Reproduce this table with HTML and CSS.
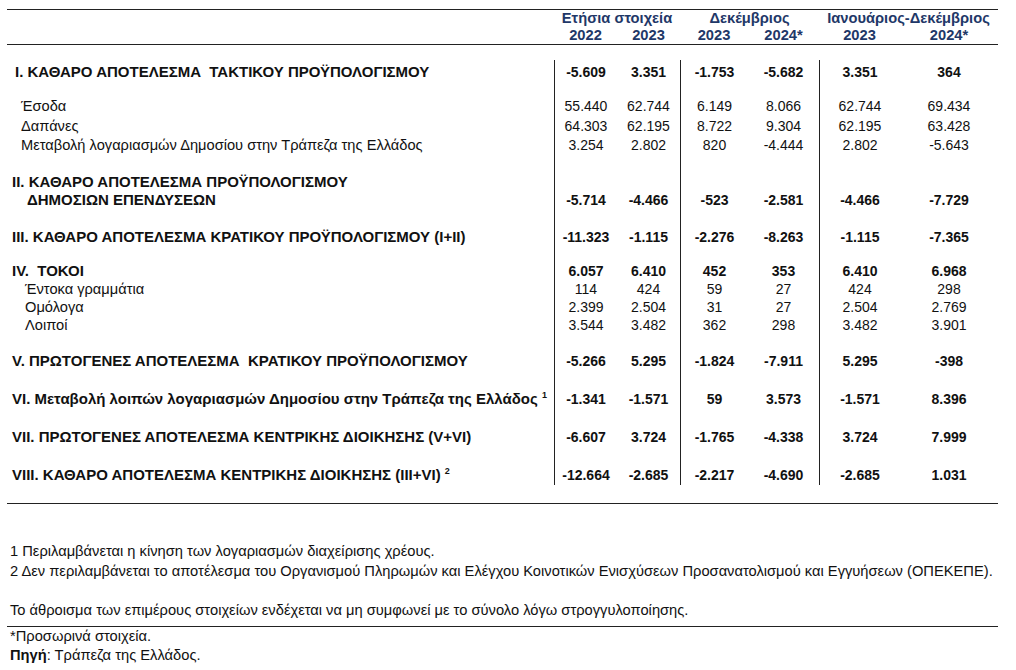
FILE: index.html
```html
<!DOCTYPE html>
<html lang="el">
<head>
<meta charset="utf-8">
<title>Αποτελέσματα προϋπολογισμού</title>
<link rel="stylesheet" href="styles.css">
</head>
<body>
<div class="page">
  <div class="head">
    <div class="hrow">
      <div></div>
      <div class="span2">Ετήσια στοιχεία</div>
      <div class="span2">Δεκέμβριος</div>
      <div class="span2">Ιανουάριος-Δεκέμβριος</div>
    </div>
    <div class="hrow">
      <div></div>
      <div>2022</div><div>2023</div><div>2023</div><div>2024*</div><div>2023</div><div>2024*</div>
    </div>
  </div>

  <div class="body">
    <div class="row b first">
      <div class="lbl l8">I. ΚΑΘΑΡΟ ΑΠΟΤΕΛΕΣΜΑ&nbsp; ΤΑΚΤΙΚΟΥ ΠΡΟΫΠΟΛΟΓΙΣΜΟΥ</div>
      <div class="v g">-5.609</div><div class="v">3.351</div><div class="v g">-1.753</div><div class="v">-5.682</div><div class="v g">3.351</div><div class="v">364</div>
    </div>
    <div class="row sub sec15">
      <div class="lbl l14">Έσοδα</div>
      <div class="v g">55.440</div><div class="v">62.744</div><div class="v g">6.149</div><div class="v">8.066</div><div class="v g">62.744</div><div class="v">69.434</div>
    </div>
    <div class="row sub">
      <div class="lbl l14">Δαπάνες</div>
      <div class="v g">64.303</div><div class="v">62.195</div><div class="v g">8.722</div><div class="v">9.304</div><div class="v g">62.195</div><div class="v">63.428</div>
    </div>
    <div class="row sub">
      <div class="lbl l14">Μεταβολή λογαριασμών Δημοσίου στην Τράπεζα της Ελλάδος</div>
      <div class="v g">3.254</div><div class="v">2.802</div><div class="v g">820</div><div class="v">-4.444</div><div class="v g">2.802</div><div class="v">-5.643</div>
    </div>
    <div class="row b two sec17">
      <div class="lbl l5">II. ΚΑΘΑΡΟ ΑΠΟΤΕΛΕΣΜΑ ΠΡΟΫΠΟΛΟΓΙΣΜΟΥ<br><span class="ind">ΔΗΜΟΣΙΩΝ ΕΠΕΝΔΥΣΕΩΝ</span></div>
      <div class="v g">-5.714</div><div class="v">-4.466</div><div class="v g">-523</div><div class="v">-2.581</div><div class="v g">-4.466</div><div class="v">-7.729</div>
    </div>
    <div class="row b sec18">
      <div class="lbl l5">III. ΚΑΘΑΡΟ ΑΠΟΤΕΛΕΣΜΑ ΚΡΑΤΙΚΟΥ ΠΡΟΫΠΟΛΟΓΙΣΜΟΥ (I+II)</div>
      <div class="v g">-11.323</div><div class="v">-1.115</div><div class="v g">-2.276</div><div class="v">-8.263</div><div class="v g">-1.115</div><div class="v">-7.365</div>
    </div>
    <div class="row b s18 sec15">
      <div class="lbl l5">IV.&nbsp; ΤΟΚΟΙ</div>
      <div class="v g">6.057</div><div class="v">6.410</div><div class="v g">452</div><div class="v">353</div><div class="v g">6.410</div><div class="v">6.968</div>
    </div>
    <div class="row s18">
      <div class="lbl l18">Έντοκα γραμμάτια</div>
      <div class="v g">114</div><div class="v">424</div><div class="v g">59</div><div class="v">27</div><div class="v g">424</div><div class="v">298</div>
    </div>
    <div class="row s18">
      <div class="lbl l18">Ομόλογα</div>
      <div class="v g">2.399</div><div class="v">2.504</div><div class="v g">31</div><div class="v">27</div><div class="v g">2.504</div><div class="v">2.769</div>
    </div>
    <div class="row s18">
      <div class="lbl l18">Λοιποί</div>
      <div class="v g">3.544</div><div class="v">3.482</div><div class="v g">362</div><div class="v">298</div><div class="v g">3.482</div><div class="v">3.901</div>
    </div>
    <div class="row b sec17">
      <div class="lbl l5">V. ΠΡΩΤΟΓΕΝΕΣ ΑΠΟΤΕΛΕΣΜΑ&nbsp; ΚΡΑΤΙΚΟΥ ΠΡΟΫΠΟΛΟΓΙΣΜΟΥ</div>
      <div class="v g">-5.266</div><div class="v">5.295</div><div class="v g">-1.824</div><div class="v">-7.911</div><div class="v g">5.295</div><div class="v">-398</div>
    </div>
    <div class="row b sec18">
      <div class="lbl l5">VI. Μεταβολή λοιπών λογαριασμών Δημοσίου στην Τράπεζα της Ελλάδος <sup>1</sup></div>
      <div class="v g">-1.341</div><div class="v">-1.571</div><div class="v g">59</div><div class="v">3.573</div><div class="v g">-1.571</div><div class="v">8.396</div>
    </div>
    <div class="row b sec18">
      <div class="lbl l5">VII. ΠΡΩΤΟΓΕΝΕΣ ΑΠΟΤΕΛΕΣΜΑ ΚΕΝΤΡΙΚΗΣ ΔΙΟΙΚΗΣΗΣ (V+VI)</div>
      <div class="v g">-6.607</div><div class="v">3.724</div><div class="v g">-1.765</div><div class="v">-4.338</div><div class="v g">3.724</div><div class="v">7.999</div>
    </div>
    <div class="row b sec18">
      <div class="lbl l5">VIII. ΚΑΘΑΡΟ ΑΠΟΤΕΛΕΣΜΑ ΚΕΝΤΡΙΚΗΣ ΔΙΟΙΚΗΣΗΣ (III+VI) <sup>2</sup></div>
      <div class="v g">-12.664</div><div class="v">-2.685</div><div class="v g">-2.217</div><div class="v">-4.690</div><div class="v g">-2.685</div><div class="v">1.031</div>
    </div>
  </div>

  <div class="foot">
    <p class="n1">1 Περιλαμβάνεται η κίνηση των λογαριασμών διαχείρισης χρέους.</p>
    <p class="n2">2 Δεν περιλαμβάνεται το αποτέλεσμα του Οργανισμού Πληρωμών και Ελέγχου Κοινοτικών Ενισχύσεων Προσανατολισμού και Εγγυήσεων (ΟΠΕΚΕΠΕ).</p>
    <p class="n3">Το άθροισμα των επιμέρους στοιχείων ενδέχεται να μη συμφωνεί με το σύνολο λόγω στρογγυλοποίησης.</p>
    <div class="src">
      <p>*Προσωρινά στοιχεία.</p>
      <p><b>Πηγή</b>: Τράπεζα της Ελλάδος.</p>
    </div>
  </div>
</div>
</body>
</html>
```

FILE: styles.css
```css
html, body {
  margin: 0;
  padding: 0;
  background: #fff;
}
body {
  font-family: "Liberation Sans", Arial, sans-serif;
  font-size: 14px;
  color: #111;
}
.page {
  width: 991px;
  margin-left: 7px;
  padding-top: 9px;
}
.head {
  border-top: 1px solid #222;
  border-bottom: 1px solid #222;
  color: #1f3868;
  font-weight: bold;
  font-size: 14.7px;
  line-height: 17px;
}
.hrow, .row {
  display: grid;
  grid-template-columns: 547px 63px 63px 68px 71px 81px 98px;
}
.hrow > div {
  text-align: center;
  white-space: nowrap;
}
.hrow .span2 {
  grid-column: span 2;
}
.body {
  margin-top: 15px;
}
.row > div {
  line-height: 19.5px;
}
.row .v {
  text-align: center;
  display: flex;
  align-items: flex-end;
  justify-content: center;
}
.row .g {
  border-left: 1px solid #222;
}
.row.b {
  font-weight: bold;
}
.row.b > div {
  line-height: 20px;
}
.row.first > div {
  padding-top: 2px;
}
.row.sub > div {
  line-height: 19.5px;
}
.row.s18 > div {
  line-height: 18px;
}
.row.two > div {
  line-height: 18px;
}
.row.sec15 > div { padding-top: 15px; }
.row.sec17 > div { padding-top: 17px; }
.row.sec18 > div { padding-top: 18px; }
.lbl {
  white-space: nowrap;
  font-size: 14.65px;
}
.row.b .lbl {
  font-size: 15px;
}
.l5 { padding-left: 5px; }
.l8 { padding-left: 8px; }
.l14 { padding-left: 14px; }
.l18 { padding-left: 18px; }
.ind { padding-left: 15px; }
sup {
  font-size: 9px;
  line-height: 0;
  vertical-align: 6px;
}
.foot {
  border-top: 1px solid #222;
  margin-top: 18px;
  padding-top: 37px;
  font-size: 14.7px;
  color: #111;
}
.foot p {
  margin: 0;
  padding-left: 3px;
  line-height: 20px;
  white-space: nowrap;
}
.foot .n3 {
  margin-top: 19px;
}
.src {
  border-top: 1px solid #222;
  margin-top: 6px;
}
.src p {
  line-height: 19px;
}
```
